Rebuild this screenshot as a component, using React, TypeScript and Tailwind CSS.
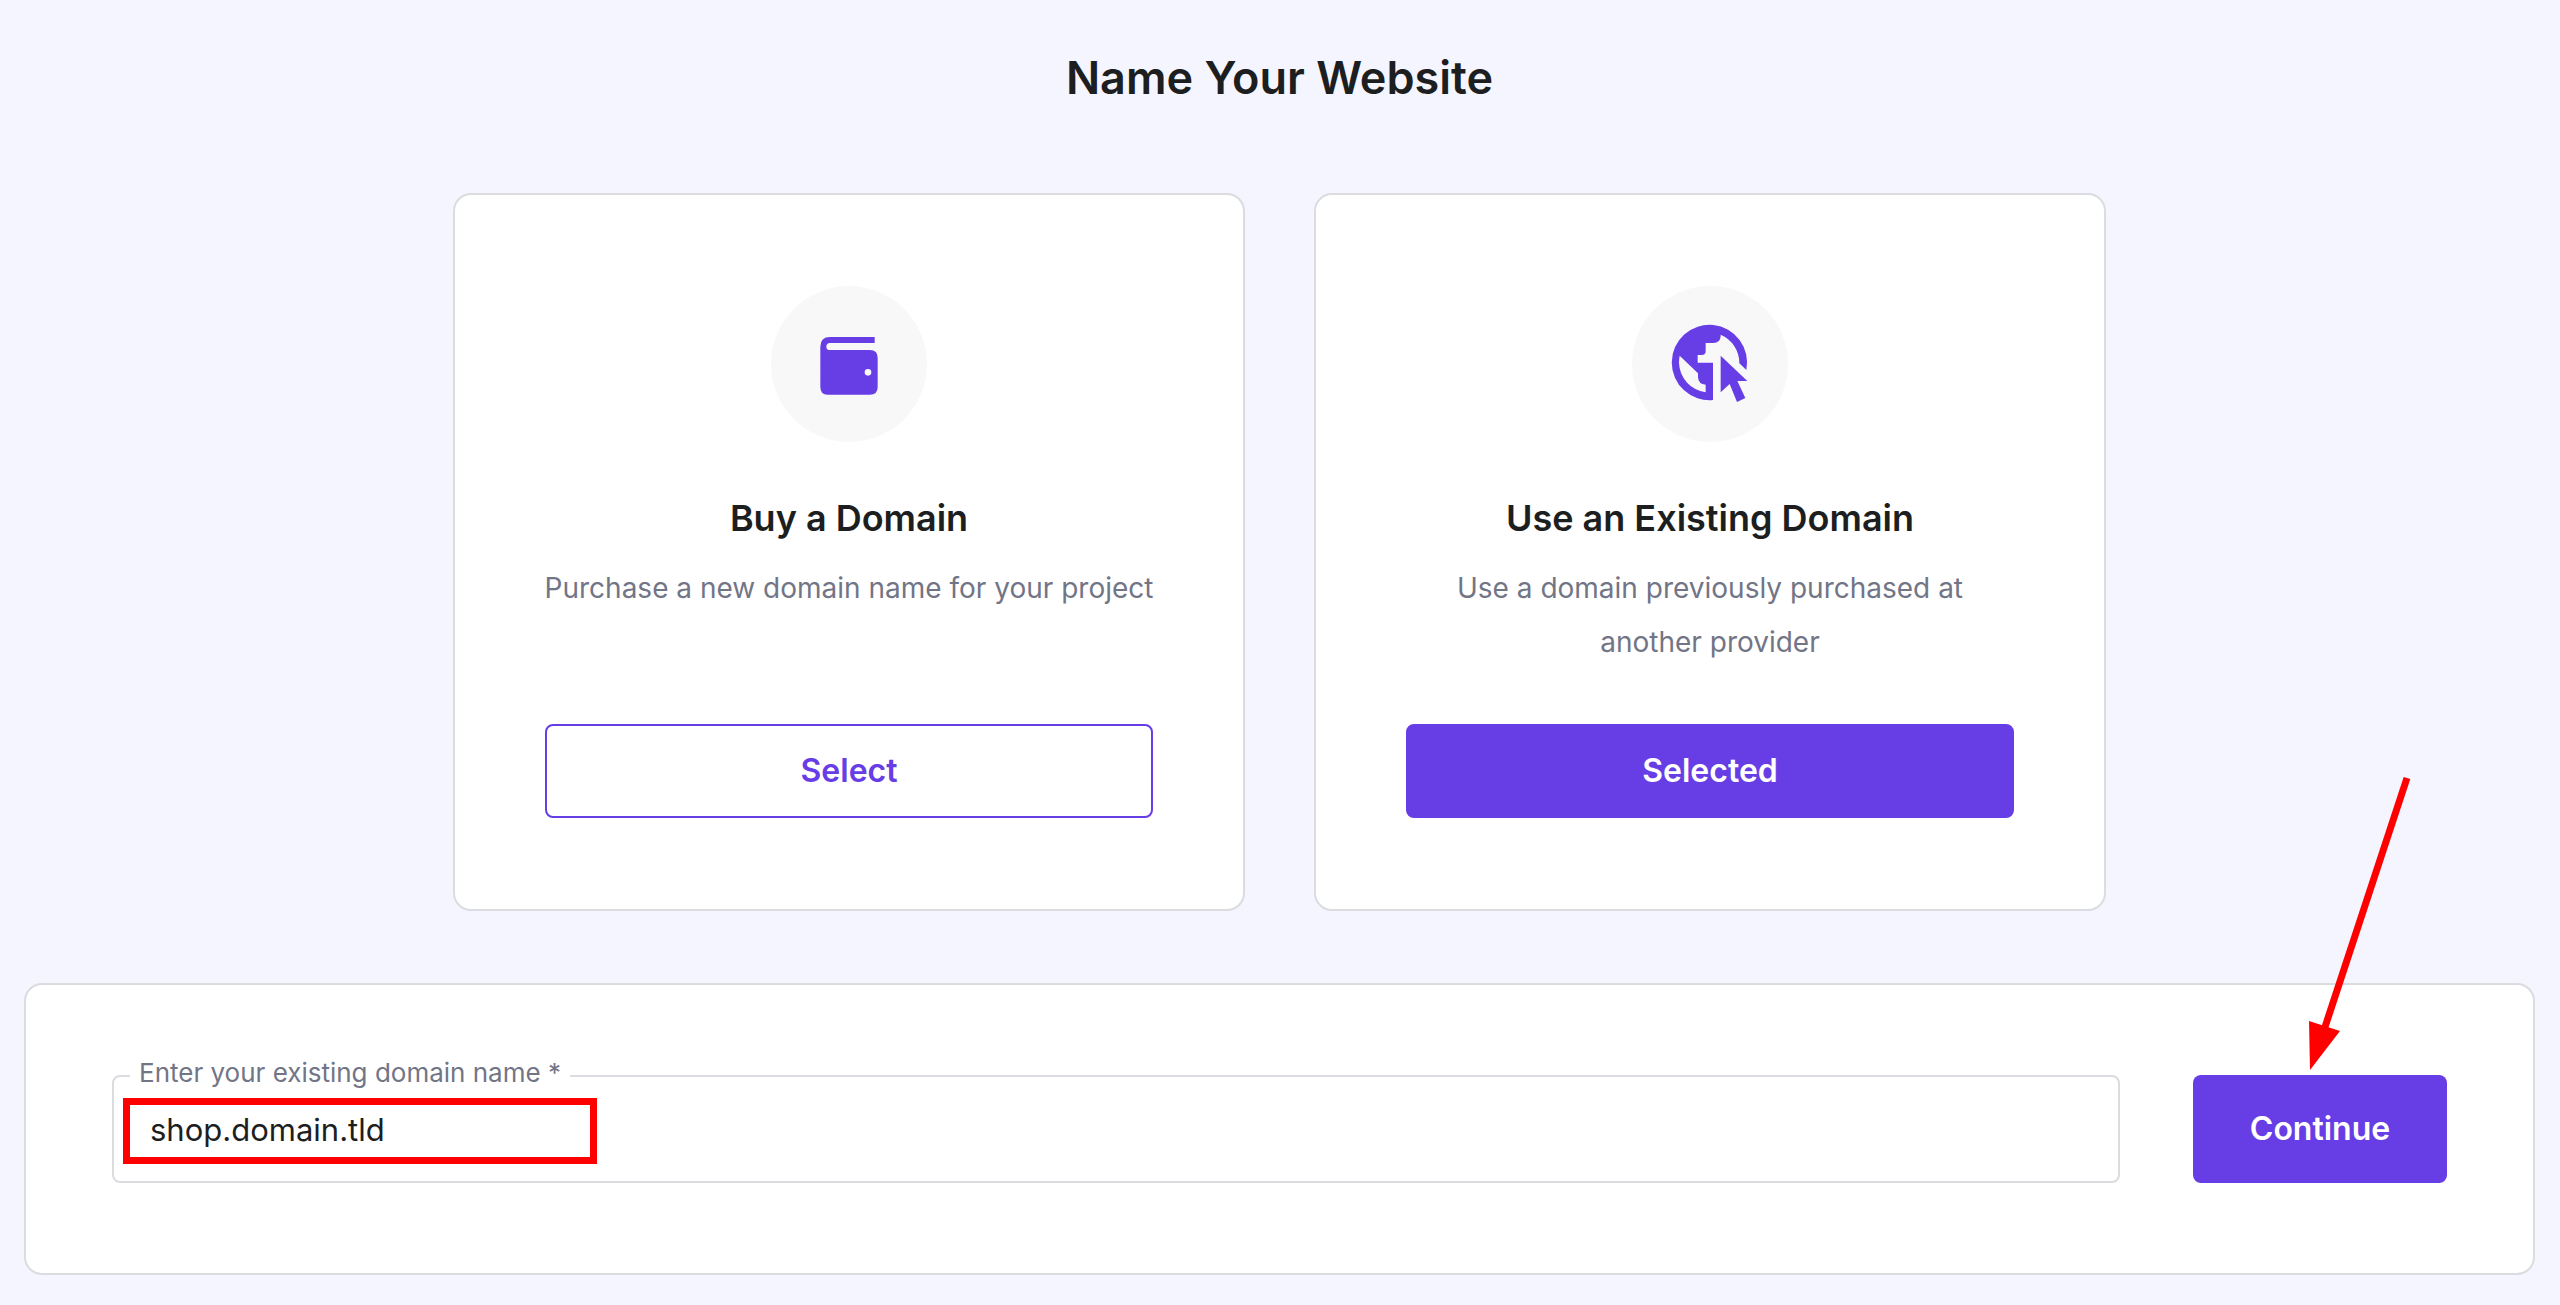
import { useState } from "react";
import type { ReactNode } from "react";

function WalletIcon() {
  return (
    <svg viewBox="93 48 468 468" className="size-[156px]" fill="#673de6" aria-hidden="true">
      <path
        fillRule="evenodd"
        d="M404 201V219H270Q259 220 259 230Q259 240 270 240H390Q413 240 413 263V351Q413 374 390 374H263Q241 374 241 351V230Q241 201 270 201ZM384 297A10 10 0 1 0 384 317A10 10 0 1 0 384 297Z"
      />
    </svg>
  );
}

function GlobeCursorIcon() {
  return (
    <svg viewBox="97 48 468 468" className="size-[156px]" fill="#673de6" aria-hidden="true">
      <path
        fillRule="evenodd"
        d="M340 390A113 113 0 1 1 440 300L419 280A92 92 0 0 0 363 194V198Q362 219 341 219H318V242Q318 255 306 255H294V278H340ZM240 257Q238 267 238 278A92 92 0 0 0 318 367V344Q296 343 295 322V310Z"
      />
      <path d="M363 257L443 333H413L437 384L412 396L390 342L363 367Z" />
    </svg>
  );
}

type OptionCardProps = {
  icon: ReactNode;
  title: string;
  description: string;
  selected: boolean;
  onSelect: () => void;
};

function OptionCard({ icon, title, description, selected, onSelect }: OptionCardProps) {
  return (
    <section className="flex flex-1 flex-col items-center rounded-[18px] border-2 border-[#dadce0] bg-white px-20 py-[91px]">
      <div className="rounded-full bg-[#f8f8f8]">{icon}</div>
      <h2 className="mt-[50px] text-[36px] leading-[52px] font-semibold text-[#1d1e20]">{title}</h2>
      <p className="mt-[17px] mb-[55px] min-h-[108px] px-2 text-center text-[28px] leading-[54px] text-[#727586]">
        {description}
      </p>
      <div className="mt-auto w-full px-2.5">
        <button
          type="button"
          aria-pressed={selected}
          onClick={onSelect}
          className={
            selected
              ? "block h-[94px] w-full rounded-lg border-2 border-[#673de6] bg-[#673de6] text-[32px] font-semibold text-white"
              : "block h-[94px] w-full rounded-lg border-2 border-[#673de6] bg-white text-[32px] font-semibold text-[#673de6]"
          }
        >
          {selected ? "Selected" : "Select"}
        </button>
      </div>
    </section>
  );
}

export default function App() {
  const [choice, setChoice] = useState("existing");
  const [domain, setDomain] = useState("shop.domain.tld");

  return (
    <main className="min-h-screen bg-[#f4f5ff] pt-12 pr-[25px] pb-7 pl-6 font-['Inter',sans-serif]">
      <h1 className="text-center text-[45px] leading-[60px] font-semibold text-[#1d1e20]">Name Your Website</h1>

      <div className="mx-auto mt-[85px] flex max-w-[1653px] gap-[69px]">
        <OptionCard
          icon={<WalletIcon />}
          title="Buy a Domain"
          description="Purchase a new domain name for your project"
          selected={choice === "buy"}
          onSelect={() => setChoice("buy")}
        />
        <OptionCard
          icon={<GlobeCursorIcon />}
          title="Use an Existing Domain"
          description="Use a domain previously purchased at another provider"
          selected={choice === "existing"}
          onSelect={() => setChoice("existing")}
        />
      </div>

      <form
        onSubmit={(event) => event.preventDefault()}
        className="mt-[72px] flex items-center gap-[73px] rounded-[18px] border-2 border-[#dadce0] bg-white px-[86px] py-[90px]"
      >
        <div className="relative flex-1">
          <input
            id="domain"
            type="text"
            required
            value={domain}
            onChange={(event) => setDomain(event.target.value)}
            className="block h-[108px] w-full rounded-lg border-2 border-[#dadce0] bg-white px-[36px] text-[31px] text-[#1d1e20] outline-none"
          />
          <label
            htmlFor="domain"
            className="absolute -top-5 left-[18px] bg-white px-[9px] text-[26px] leading-[36px] text-[#727586]"
          >
            Enter your existing domain name *
          </label>
          <div className="pointer-events-none absolute top-[23px] left-[11px] h-[66px] w-[474px] border-7 border-[#ff0000]" />
        </div>
        <div className="relative">
          <button
            type="submit"
            className="block h-[108px] w-[254px] rounded-lg bg-[#673de6] text-[32px] font-semibold text-white"
          >
            Continue
          </button>
          <svg
            viewBox="0 0 110 300"
            className="pointer-events-none absolute bottom-full left-[112px] h-[300px] w-[110px]"
            fill="#ff0000"
            aria-hidden="true"
          >
            <path d="M102 3L19 255" stroke="#ff0000" strokeWidth="7" />
            <path d="M5 295L4 246L35 256Z" />
          </svg>
        </div>
      </form>
    </main>
  );
}
